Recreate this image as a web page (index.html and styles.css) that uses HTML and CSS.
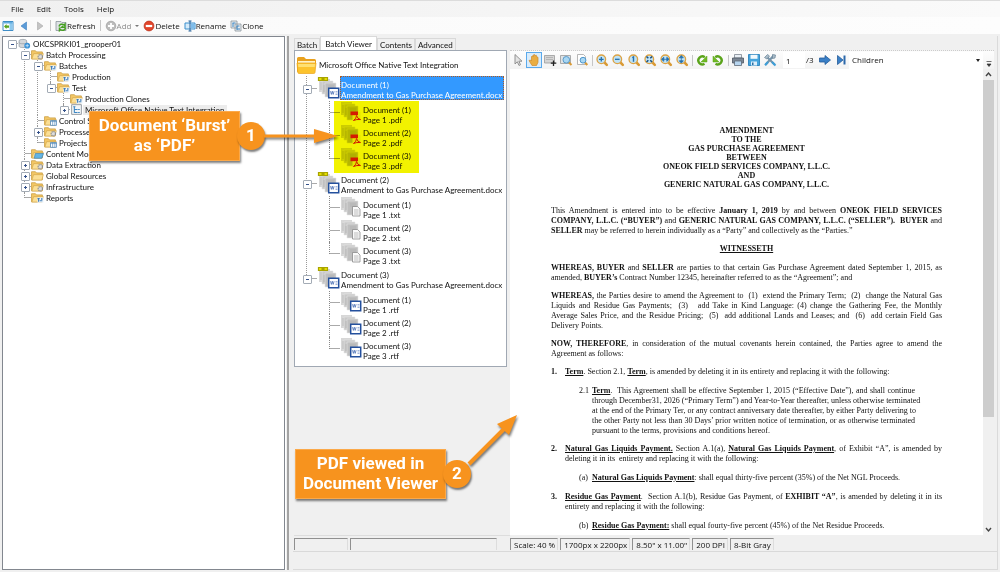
FILE: index.html
```html
<!DOCTYPE html>
<html lang="en">
<head>
    <meta charset="UTF-8">
    <meta name="viewport" content="width=device-width, initial-scale=1.0">
    <title>Grooper - Batch Viewer</title>
    <link rel="stylesheet" href="styles.css">
</head>
<body>
    <!-- Shared icons -->
    <svg class="sprite" width="0" height="0" aria-hidden="true">
        <symbol id="folder" viewBox="0 0 12 10">
            <path d="M.5 9V1.5h3.6l1 1.1h5.4V9z" fill="#f3c766" stroke="#c99a3c" stroke-width=".7"/>
            <path d="M.8 9.2 2.4 4.2h9L10 9.2z" fill="#fbdf95" stroke="#d2a548" stroke-width=".6"/>
        </symbol>
        <symbol id="folder-batch" viewBox="0 0 12 10">
            <use href="#folder"/>
            <path d="M6 5h5.5v4.8H6z" fill="#eef5fb"/>
            <path d="M6 6h2M8 8h2.5M7 6v3M10 5.4v2" stroke="#3f7cb8" stroke-width="1"/>
        </symbol>
        <symbol id="folder-gear" viewBox="0 0 12 10">
            <use href="#folder"/>
            <circle cx="8.6" cy="7" r="2" fill="#ddd" stroke="#8d8d8d" stroke-width="1.1" stroke-dasharray="1.2 .5"/>
        </symbol>
        <symbol id="folder-grid" viewBox="0 0 12 10">
            <use href="#folder"/>
            <path d="M6 5h5.5v4.5H6z" fill="#fff" stroke="#4d86b9" stroke-width=".7"/>
            <path d="M6 6h5.5M8 5v4.5M10 5v4.5" stroke="#4d86b9" stroke-width=".6"/>
        </symbol>
        <symbol id="folder-blue" viewBox="0 0 12 10">
            <use href="#folder"/>
            <path d="M4 5h7.5L10 9.4H3z" fill="#63b4e4" stroke="#3b82b5" stroke-width=".6"/>
        </symbol>
        <symbol id="server" viewBox="0 0 12 10">
            <path d="M1 2.5C1 .8 8 .8 8 2.5v5C8 9.2 1 9.2 1 7.5z" fill="#d3d7da" stroke="#929ba2" stroke-width=".7"/>
            <path d="M1 4.2c0 1.4 7 1.4 7 0" fill="none" stroke="#929ba2" stroke-width=".7"/>
            <circle cx="8.5" cy="7" r="2.7" fill="#3d93d6"/>
            <path d="M7 7h3M8.5 5.5v3" stroke="#cfe8fa" stroke-width=".7"/>
        </symbol>
        <symbol id="batch" viewBox="0 0 12 10">
            <path d="M1.5.5h9v9h-9z" fill="#f4f6f8" stroke="#8a9198" stroke-width=".8"/>
            <path d="M3 2.5h2M4 2.5v5.5M4 5h3M4 7.8h3M7.5 5H9M7.5 7.8H9" stroke="#3c86c2" stroke-width="1" fill="none"/>
        </symbol>
        <symbol id="big-folder" viewBox="0 0 21 18">
            <path d="M1 16V2.5Q1 1 2.5 1H8l2 2h8.5q1.5 0 1.5 1.5V8z" fill="#e9a11e"/>
            <path d="M2 5h17v5H2z" fill="#fff2c5"/>
            <path d="M1 7h19l-1 9.5q-.2 1-1.200 1H3q-1 0-1.200-1z" fill="#fcc32d" stroke="#eba51d" stroke-width=".7"/>
            <path d="M2 8h17l-.3 3H2.3z" fill="#ffe071"/>
        </symbol>
        <symbol id="stack" viewBox="0 0 21 21">
            <path d="M0 1h11v13H0z" fill="#d7d7d7"/>
            <path d="M3 3h11v13H3z" fill="#c9c9c9" stroke="#e6e6e6" stroke-width=".6"/>
            <path d="M6 5h11v14H6z" fill="#bfbfbf" stroke="#e6e6e6" stroke-width=".6"/>
            <path d="M2 4v8M5 7v7M9 8h6M9 10h6" stroke="#adadad" stroke-width=".6"/>
        </symbol>
        <symbol id="stack-word" viewBox="0 0 21 21">
            <use href="#stack"/>
            <path d="M9.7 10.2h10v9.500h-10z" fill="#fff" stroke="#24509d" stroke-width="1.5"/>
            <path d="M11.500 13.200l.9 3.200.9-3.200.9 3.200.9-3.200" fill="none" stroke="#4a70b5" stroke-width=".8"/>
            <path d="M16.500 13.500h2M16.500 15h2M16.500 16.500h2" stroke="#7793c8" stroke-width=".7"/>
        </symbol>
        <symbol id="stack-text" viewBox="0 0 21 21">
            <use href="#stack"/>
            <path d="M11.5 10.5h5l2.5 2.5v7h-7.5z" fill="#fafafa" stroke="#8b8b8b" stroke-width=".8"/>
            <path d="M13 14h4.500M13 16h4.500M13 18h4.500" stroke="#a4a4a4" stroke-width=".7"/>
        </symbol>
        <symbol id="stack-pdf" viewBox="0 0 21 21">
            <use href="#stack"/>
            <path d="M11.500 11h8v8.500h-8z" fill="#f1f1f1"/>
            <path d="M9.500 10.500h7.500v3.700H9.500z" fill="#e01c10"/>
            <path d="M12.500 19.500q3-2 3-5 1 3.500 4 4-4-.5-7 1z" fill="none" stroke="#e01c10" stroke-width="1"/>
        </symbol>
        <symbol id="lens" viewBox="0 0 14 14">
            <path d="M8.500 8.500l3.300 3.300" stroke="#d99a35" stroke-width="2.600" stroke-linecap="round"/>
            <circle cx="6.300" cy="6.300" r="4.300" fill="#bfe3f7" stroke="#dca243" stroke-width="1.300"/>
        </symbol>
        <symbol id="rotate" viewBox="0 0 14 14">
            <path d="M9.500 10.800A4 4 0 1 1 9.800 4.200" fill="none" stroke="#5aa31a" stroke-width="2.400"/>
            <path d="M12 3v6H6z" fill="#70ba24" stroke="#5aa31a" stroke-width=".5"/>
        </symbol>
    </svg>

    <nav class="menubar">
        <button>File</button>
        <button>Edit</button>
        <button>Tools</button>
        <button>Help</button>
    </nav>

    <div class="toolbar">
        <button aria-label="Toggle tree"><svg width="12" height="12" viewBox="0 0 12 12"><path d="M1 1.500h10v9H1z" fill="#fff" stroke="#3f8dc6"/><path d="M7.500 2h3v8h-3z" fill="#8dc9ee"/><path d="M1.500 2h9v1.500h-9z" fill="#62ade0"/><path d="M2 6.500 4.500 4v1.500H7v2.200H4.500V9z" fill="#58a51d"/></svg></button>
        <button class="nav" aria-label="Back"><svg width="8" height="10" viewBox="0 0 8 10"><path d="M6.500 1v8L1 5z" fill="#5b9bd8" stroke="#3c7fc0" stroke-width=".6"/></svg></button>
        <button class="nav" aria-label="Forward"><svg width="8" height="10" viewBox="0 0 8 10"><path d="M1.500 1v8L7 5z" fill="#c4c4c4" stroke="#aaa" stroke-width=".6"/></svg></button>
        <span class="sep"></span>
        <button><svg width="12" height="12" viewBox="0 0 12 12"><path d="M1 1.500h5l1 1h4v8H1z" fill="#dfe3e6" stroke="#8a949c" stroke-width=".8"/><path d="M4 6.500a3 3 0 0 1 5-1.500l1-1v3.200H6.800L8 6M10.500 8a3 3 0 0 1-5 1.500l-1 1V7.600" fill="none" stroke="#47a023" stroke-width="1.500"/></svg>Refresh</button>
        <span class="sep"></span>
        <button disabled><svg width="12" height="12" viewBox="0 0 12 12"><circle cx="6" cy="6" r="4.800" fill="#bcbcbc" stroke="#a2a2a2" stroke-width=".8"/><path d="M6 3v6M3 6h6" stroke="#fff" stroke-width="1.800"/></svg>Add<i class="caret"></i></button>
        <button><svg width="12" height="12" viewBox="0 0 12 12"><circle cx="6" cy="6" r="4.900" fill="#e2452b" stroke="#bd3620" stroke-width=".8"/><path d="M2.800 6h6.400" stroke="#fff" stroke-width="2.200"/></svg>Delete</button>
        <button><svg width="12" height="12" viewBox="0 0 12 12"><path d="M1 3h10v6H1z" fill="#d5ebfa" stroke="#3b8fcd"/><path d="M4.500 1h3M6 1v10M4.500 11h3" stroke="#27639b" fill="none"/><path d="M7 4h3.500v4H7z" fill="#7dbcea"/></svg>Rename</button>
        <button><svg width="12" height="12" viewBox="0 0 12 12"><path d="M1 1h6v7H1zM5 4h6v7H5z" fill="#e8edf1" stroke="#8a949c" stroke-width=".8"/><path d="M2.500 3h3M3 3v4M6.500 6h3M7 6v4M7 9h3" stroke="#3c86c2"/></svg>Clone</button>
    </div>

    <main class="workspace">
        <section class="tree-panel">
            <ul class="tree">
                <li>
                    <div class="row"><i class="exp open"></i><svg><use href="#server"/></svg><span>OKCSPRKI01_grooper01</span></div>
                    <ul>
                        <li>
                            <div class="row"><i class="exp open"></i><svg><use href="#folder-gear"/></svg><span>Batch Processing</span></div>
                            <ul>
                                <li>
                                    <div class="row"><i class="exp open"></i><svg><use href="#folder-batch"/></svg><span>Batches</span></div>
                                    <ul>
                                        <li><div class="row"><i class="exp"></i><svg><use href="#folder-batch"/></svg><span>Production</span></div></li>
                                        <li>
                                            <div class="row"><i class="exp open"></i><svg><use href="#folder-batch"/></svg><span>Test</span></div>
                                            <ul>
                                                <li><div class="row"><i class="exp"></i><svg><use href="#folder-batch"/></svg><span>Production Clones</span></div></li>
                                                <li><div class="row current"><i class="exp closed"></i><svg><use href="#batch"/></svg><span>Microsoft Office Native Text Integration</span></div></li>
                                            </ul>
                                        </li>
                                    </ul>
                                </li>
                                <li><div class="row"><i class="exp"></i><svg><use href="#folder-grid"/></svg><span>Control Sheets</span></div></li>
                                <li><div class="row"><i class="exp closed"></i><svg><use href="#folder-gear"/></svg><span>Processes</span></div></li>
                                <li><div class="row"><i class="exp"></i><svg><use href="#folder-grid"/></svg><span>Projects</span></div></li>
                            </ul>
                        </li>
                        <li><div class="row"><i class="exp"></i><svg><use href="#folder-blue"/></svg><span>Content Models</span></div></li>
                        <li><div class="row"><i class="exp closed"></i><svg><use href="#folder-gear"/></svg><span>Data Extraction</span></div></li>
                        <li><div class="row"><i class="exp closed"></i><svg><use href="#folder"/></svg><span>Global Resources</span></div></li>
                        <li><div class="row"><i class="exp closed"></i><svg><use href="#folder-gear"/></svg><span>Infrastructure</span></div></li>
                        <li><div class="row"><i class="exp"></i><svg><use href="#folder-batch"/></svg><span>Reports</span></div></li>
                    </ul>
                </li>
            </ul>
        </section>

        <div class="splitter"></div>

        <div class="editor">
            <div class="tabs" role="tablist">
                <button role="tab">Batch</button>
                <button role="tab" class="active" aria-selected="true">Batch Viewer</button>
                <button role="tab">Contents</button>
                <button role="tab">Advanced</button>
            </div>

            <div class="panes">
                <section class="batch-pane">
                    <div class="batch-tree">
                        <div class="batch-root"><svg width="21" height="18"><use href="#big-folder"/></svg>Microsoft Office Native Text Integration</div>
                        <ul class="docs">
                            <li>
                                <div class="doc selected"><i class="exp open"></i><svg class="chain" width="12" height="6" viewBox="0 0 12 6"><path d="M1.500 1.500h4v3h-4zM6.500 1.500h4v3h-4zM4 3h4" fill="#e6e000" stroke="#a8a300" stroke-width="1.200"/></svg><svg width="21" height="21"><use href="#stack-word"/></svg><p>Document (1)<br>Amendment to Gas Purchase Agreement.docx</p></div>
                                <ul class="pages marked">
                                    <li><svg width="21" height="21"><use href="#stack-pdf"/></svg><p>Document (1)<br>Page 1 .pdf</p></li>
                                    <li><svg width="21" height="21"><use href="#stack-pdf"/></svg><p>Document (2)<br>Page 2 .pdf</p></li>
                                    <li><svg width="21" height="21"><use href="#stack-pdf"/></svg><p>Document (3)<br>Page 3 .pdf</p></li>
                                </ul>
                            </li>
                            <li>
                                <div class="doc"><i class="exp open"></i><svg class="chain" width="12" height="6" viewBox="0 0 12 6"><path d="M1.500 1.500h4v3h-4zM6.500 1.500h4v3h-4zM4 3h4" fill="#e6e000" stroke="#a8a300" stroke-width="1.200"/></svg><svg width="21" height="21"><use href="#stack-word"/></svg><p>Document (2)<br>Amendment to Gas Purchase Agreement.docx</p></div>
                                <ul class="pages">
                                    <li><svg width="21" height="21"><use href="#stack-text"/></svg><p>Document (1)<br>Page 1 .txt</p></li>
                                    <li><svg width="21" height="21"><use href="#stack-text"/></svg><p>Document (2)<br>Page 2 .txt</p></li>
                                    <li><svg width="21" height="21"><use href="#stack-text"/></svg><p>Document (3)<br>Page 3 .txt</p></li>
                                </ul>
                            </li>
                            <li>
                                <div class="doc"><i class="exp open"></i><svg class="chain" width="12" height="6" viewBox="0 0 12 6"><path d="M1.500 1.500h4v3h-4zM6.500 1.500h4v3h-4zM4 3h4" fill="#e6e000" stroke="#a8a300" stroke-width="1.200"/></svg><svg width="21" height="21"><use href="#stack-word"/></svg><p>Document (3)<br>Amendment to Gas Purchase Agreement.docx</p></div>
                                <ul class="pages">
                                    <li><svg width="21" height="21"><use href="#stack-word"/></svg><p>Document (1)<br>Page 1 .rtf</p></li>
                                    <li><svg width="21" height="21"><use href="#stack-word"/></svg><p>Document (2)<br>Page 2 .rtf</p></li>
                                    <li><svg width="21" height="21"><use href="#stack-word"/></svg><p>Document (3)<br>Page 3 .rtf</p></li>
                                </ul>
                            </li>
                        </ul>
                    </div>
                    <div class="status batch-status"><span></span><span></span></div>
                </section>

                <section class="viewer">
                    <div class="viewer-bar">
                        <button aria-label="Select"><svg viewBox="0 0 14 14"><path d="M4 1.500v9.500l2.300-2.200 1.700 3.700 1.500-.8-1.600-3.500H11z" fill="#e4e4e4" stroke="#888" stroke-width=".9"/></svg></button>
                        <button class="on" aria-label="Pan"><svg viewBox="0 0 14 14"><path d="M2 7.500 3.500 7l1 1V3.500l1.300-.6.4 1V2l1.500-.4.3 1.200 1.300-.5.5 1.700 1.200.3v5L9.500 12.500H5z" fill="#e9ad42" stroke="#d0892a" stroke-width=".7"/></svg></button>
                        <button aria-label="Add region"><svg viewBox="0 0 14 14"><path d="M1.500 2.500h10v7.500h-10z" fill="#d5d5d5" stroke="#9a9a9a" stroke-width=".8"/><path d="M3 4.500h7M3 6.500h7" stroke="#b5b5b5"/><path d="M10.500 7.500v5.500M7.800 10.200h5.500" stroke="#222" stroke-width="1.300"/></svg></button>
                        <button aria-label="Zoom region"><svg viewBox="0 0 14 14"><path d="M1.500 2.500h10v8h-10z" fill="#dfe3e6" stroke="#999" stroke-width=".8"/><path d="M9.500 9l3 3" stroke="#d99a35" stroke-width="2"/><circle cx="7.300" cy="6.800" r="3.300" fill="#a9d7f3" stroke="#5a9ac9"/></svg></button>
                        <button aria-label="Magnifier"><svg viewBox="0 0 14 14"><path d="M2.500 1.500h6l2 2v8h-8z" fill="#fff" stroke="#a5a5a5" stroke-width=".8"/><path d="M9.800 9.300l2.500 2.700" stroke="#d99a35" stroke-width="2"/><circle cx="8" cy="7.200" r="2.900" fill="#a9d7f3" stroke="#4f97cc"/></svg></button>
                        <span class="sep"></span>
                        <button aria-label="Zoom in"><svg viewBox="0 0 14 14"><use href="#lens"/><path d="M6.300 4v4.600M4 6.300h4.600" stroke="#2470ad" stroke-width="1.300"/></svg></button>
                        <button aria-label="Zoom out"><svg viewBox="0 0 14 14"><use href="#lens"/><path d="M4 6.300h4.600" stroke="#2470ad" stroke-width="1.300"/></svg></button>
                        <button aria-label="Actual size"><svg viewBox="0 0 14 14"><use href="#lens"/><path d="M5.300 4.600l1.200-.6v4.800" fill="none" stroke="#2470ad" stroke-width="1.400"/></svg></button>
                        <button aria-label="Fit page"><svg viewBox="0 0 14 14"><use href="#lens"/><path d="M3.500 3.500l5.600 5.600M9.100 3.500 3.500 9.100" stroke="#174f80" stroke-width="1.500" stroke-dasharray="2.600 2.700"/></svg></button>
                        <button aria-label="Fit width"><svg viewBox="0 0 14 14"><use href="#lens"/><path d="M2.500 6.300l2.300-2v4zM10.100 6.300l-2.300-2v4zM4 6.300h5" fill="#2470ad" stroke="#2470ad" stroke-width=".8"/></svg></button>
                        <button aria-label="Fit height"><svg viewBox="0 0 14 14"><use href="#lens"/><path d="M6.300 2.500l-2 2.300h4zM6.300 10.100l-2-2.300h4zM6.300 4v5" fill="#2470ad" stroke="#2470ad" stroke-width=".8"/></svg></button>
                        <span class="sep"></span>
                        <button aria-label="Rotate left"><svg viewBox="0 0 14 14"><use href="#rotate"/></svg></button>
                        <button aria-label="Rotate right"><svg viewBox="0 0 14 14"><g transform="matrix(-1 0 0 1 14 0)"><use href="#rotate"/></g></svg></button>
                        <span class="sep"></span>
                        <button aria-label="Print"><svg viewBox="0 0 14 14"><path d="M3.500 1.500h7V5h-7z" fill="#e8eef4" stroke="#7d8791" stroke-width=".8"/><path d="M1.500 5h11v5h-11z" fill="#7c8794" stroke="#4c5663" stroke-width=".8"/><path d="M3.500 8h7v4.500h-7z" fill="#b7d5ef" stroke="#5e6a77" stroke-width=".8"/></svg></button>
                        <button aria-label="Save"><svg viewBox="0 0 14 14"><path d="M1.500 1.500h11v11h-11z" fill="#45a4dc" stroke="#2a83bd" stroke-width=".9"/><path d="M3.500 1.800h7v4h-7z" fill="#f2f9fd"/><path d="M4 8.500h6v4H4z" fill="#dceefa"/><path d="M5 9.500h1.500v2.500H5z" fill="#2a6fa3"/></svg></button>
                        <button aria-label="Settings"><svg viewBox="0 0 14 14"><path d="M2.500 11.800l8-9M11.800 11.800 4 4" stroke="#7693a8" stroke-width="2.200"/><path d="M1.500 4.500l3-3 2 1.500-2.700 3zM9.500 1.500l3 .5-.5 3-2.500.5z" fill="#a9bcc9" stroke="#688296" stroke-width=".7"/><path d="M9 9l3.500 3.500M5 9l-3 3.200" stroke="#3f9fd8" stroke-width="2"/></svg></button>
                        <input class="page-no" type="text" value="1" aria-label="Page">
                        <span class="page-total">/3</span>
                        <button aria-label="Next page"><svg viewBox="0 0 14 14"><path d="M1.500 5h5.500V2.500L12.500 7 7 11.500V9H1.500z" fill="#3a7fc6" stroke="#235c99" stroke-width=".8"/></svg></button>
                        <button aria-label="Last page"><svg viewBox="0 0 14 14"><path d="M3.500 2.500v9L9 7z" fill="#3a7fc6" stroke="#235c99" stroke-width=".8"/><path d="M10.500 2.500v9" stroke="#2c68aa" stroke-width="2"/></svg></button>
                        <div class="select-wrap">
                            <select aria-label="Scope"><option>Children</option></select>
                        </div>
                        <button class="more" aria-label="Toolbar options"><svg viewBox="0 0 8 8"><path d="M1.500 1.500h5M2 4h4L4 6.500z" fill="#333" stroke="#333" stroke-width=".7"/></svg></button>
                    </div>

                    <div class="canvas">
                        <article class="paper">
                            <h1>AMENDMENT<br>TO THE<br>GAS PURCHASE AGREEMENT<br>BETWEEN<br>ONEOK FIELD SERVICES COMPANY, L.L.C.<br>AND<br>GENERIC NATURAL GAS COMPANY, L.L.C.</h1>
                            <p>This Amendment is entered into to be effective <b>January 1, 2019</b> by and between <b>ONEOK FIELD SERVICES</b><br>
                                <b>COMPANY, L.L.C. (“BUYER”)</b> and <b>GENERIC NATURAL GAS COMPANY, L.L.C. (“SELLER”).&nbsp; BUYER</b> and<br>
                                <span class="last"><b>SELLER</b> may be referred to herein individually as a “Party” and collectively as the “Parties.”</span></p>
                            <h2>WITNESSETH</h2>
                            <p><b>WHEREAS, BUYER</b> and <b>SELLER</b> are parties to that certain Gas Purchase Agreement dated September 1, 2015, as<br>
                                <span class="last">amended, <b>BUYER’s</b> Contract Number 12345, hereinafter referred to as the “Agreement”; and</span></p>
                            <p><b>WHEREAS,</b> the Parties desire to amend the Agreement to &nbsp;(1)&nbsp; extend the Primary Term;&nbsp; (2)&nbsp; change the Natural Gas<br>
                                Liquids and Residue Gas Payments;&nbsp; (3)&nbsp;&nbsp; add Take in Kind Language: (4) change the Gathering Fee, the Monthly<br>
                                Average Sales Price, and the Residue Pricing;&nbsp; (5)&nbsp; add additional Lands and Leases; and &nbsp;(6)&nbsp; add certain Field Gas<br>
                                <span class="last">Delivery Points.</span></p>
                            <p><b>NOW, THEREFORE</b>, in consideration of the mutual covenants herein contained, the Parties agree to amend the<br>
                                <span class="last">Agreement as follows:</span></p>
                            <div class="clause">
                                <b>1.</b>
                                <p><span class="last"><u>Term</u>. Section 2.1, <u>Term</u>, is amended by deleting it in its entirety and replacing it with the following:</span></p>
                            </div>
                            <div class="clause sub narrow">
                                <span>2.1</span>
                                <p><u>Term</u>.&nbsp; This Agreement shall be effective September 1, 2015 (“Effective Date”), and shall continue<br>
                                    through December31, 2026 (“Primary Term”) and Year-to-Year thereafter, unless otherwise terminated<br>
                                    at the end of the Primary Ter, or any contract anniversary date thereafter, by either Party delivering to<br>
                                    the other Party not less than 30 Days’ prior written notice of termination, or as otherwise terminated<br>
                                    <span class="last">pursuant to the terms, provisions and conditions hereof.</span></p>
                            </div>
                            <div class="clause">
                                <b>2.</b>
                                <p><u>Natural Gas Liquids Payment.</u> Section A.1(a), <u>Natural Gas Liquids Payment</u>, of Exhibit “A”, is amended by<br>
                                    <span class="last">deleting it in its &nbsp;entirety and replacing it with the following:</span></p>
                            </div>
                            <div class="clause sub">
                                <span>(a)</span>
                                <p><span class="last"><u>Natural Gas Liquids Payment</u>: shall equal thirty-five percent (35%) of the Net NGL Proceeds.</span></p>
                            </div>
                            <div class="clause">
                                <b>3.</b>
                                <p><u>Residue Gas Payment</u>.&nbsp; Section A.1(b), Residue Gas Payment, of <b>EXHIBIT “A”</b>, is amended by deleting it in its<br>
                                    <span class="last">entirety and replacing it with the following:</span></p>
                            </div>
                            <div class="clause sub">
                                <span>(b)</span>
                                <p><span class="last"><u>Residue Gas Payment:</u> shall equal fourty-five percent (45%) of the Net Residue Proceeds.</span></p>
                            </div>
                        </article>
                        <div class="scrollbar">
                            <svg viewBox="0 0 11 11"><path d="M3 7l2.500-3L8 7" fill="none" stroke="#444" stroke-width="1.400"/></svg>
                            <div class="track"><div class="thumb"></div></div>
                            <svg viewBox="0 0 11 11"><path d="M3 4l2.500 3L8 4" fill="none" stroke="#444" stroke-width="1.400"/></svg>
                        </div>
                    </div>

                    <div class="status">
                        <span>Scale: 40 %</span>
                        <span>1700px x 2200px</span>
                        <span>8.50" x 11.00"</span>
                        <span>200 DPI</span>
                        <span>8-Bit Gray</span>
                    </div>
                </section>
            </div>
        </div>
    </main>

    <!-- Tutorial callouts -->
    <div class="callout burst">
        Document ‘Burst’<br>as ‘PDF’
        <span class="num">1</span>
        <svg class="arrow" width="76" height="16" viewBox="0 0 76 16"><path d="M0 8h56" stroke="#f7931e" stroke-width="3"/><path d="M50 1l24 7-24 7z" fill="#f7931e"/></svg>
    </div>
    <div class="callout viewed">
        PDF viewed in<br>Document Viewer
        <span class="num">2</span>
        <svg class="arrow" width="54" height="54" viewBox="0 0 54 54"><path d="M2 50 38 14" stroke="#f7931e" stroke-width="4"/><path d="M50 1 42 21 30 10z" fill="#f7931e"/></svg>
    </div>
</body>
</html>
```

FILE: styles.css
```css
* {
    box-sizing: border-box;
}
html, body {
    height: 100%;
}
body {
    margin: 0;
    display: flex;
    flex-direction: column;
    position: relative;
    overflow: hidden;
    background-color: #f0f0f0;
    color: #111;
    font-family: "Open Sans", "Noto Sans", sans-serif;
    font-size: 8px;
    line-height: 10px;
}
ul {
    list-style: none;
    margin: 0;
    padding: 0;
}
p {
    margin: 0;
}
svg {
    display: block;
    flex: none;
}
.sprite {
    position: absolute;
}
button, input, select {
    font: inherit;
    color: inherit;
    border: none;
    background: none;
    padding: 0;
    margin: 0;
}

/* Menu and main toolbar */
.menubar {
    display: flex;
    gap: 13px;
    height: 17px;
    padding: 0 11px;
    background: linear-gradient(to right, #f0f0f0, #fafafa);
    border-top: 1px solid #dcdcdc;
}
.toolbar {
    display: flex;
    align-items: center;
    gap: 4px;
    height: 17px;
    padding: 0 2px;
    background: linear-gradient(to right, #fafafa, #fdfdfd);
}
.toolbar button {
    display: flex;
    align-items: center;
}
.toolbar .nav {
    width: 12px;
    justify-content: center;
}
.toolbar button:disabled {
    color: #8d8d8d;
}
.sep {
    width: 1px;
    height: 11px;
    background-color: #c6c6c6;
}
.caret {
    margin-left: 4px;
    border: 2px solid transparent;
    border-top-color: #777;
    border-bottom: none;
}

/* Layout */
.workspace {
    flex: 1;
    display: flex;
    min-height: 0;
    padding: 2px;
}
.tree-panel {
    width: 283px;
    background-color: #fff;
    border: 1px solid #82878f;
    padding: 1px 2px;
}
.splitter {
    width: 4px;
    margin-right: 4px;
    border-left: 1px solid #fff;
    border-right: 2px solid #a3a3a3;
}
.editor {
    flex: 1;
    display: flex;
    flex-direction: column;
    min-width: 0;
    border: 1px solid #dadada;
    border-top: none;
    border-left: none;
}
.panes {
    flex: 1;
    display: flex;
    min-height: 0;
    margin-bottom: 17px;
    padding-right: 3px;
    border-bottom: 1px solid #d9d9d9;
}

/* Node tree */
.tree, .tabs, .batch-tree {
    font-family: Lato, "Liberation Sans", sans-serif;
}
.tree ul {
    margin-left: 13px;
}
.tree li {
    position: relative;
}
.tree li::before {
    content: "";
    position: absolute;
    left: 6px;
    top: 0;
    bottom: 0;
    border-left: 1px dotted #999;
}
.tree li:last-child::before {
    bottom: auto;
    height: 6px;
}
.tree > li::before {
    display: none;
}
.row {
    display: flex;
    align-items: center;
    height: 11px;
    white-space: nowrap;
}
.row svg {
    width: 13px;
    height: 11px;
}
.row span {
    padding: 0 2px;
}
.row.current span {
    background-color: #ececec;
}
.row .exp {
    width: 13px;
    height: 7px;
    background: linear-gradient(#aaa, #aaa) 7px 3px / 6px 1px no-repeat;
}
.exp {
    position: relative;
    flex: none;
}
.exp.open::before, .exp.closed::before {
    content: "";
    position: absolute;
    left: 3px;
    top: 0;
    width: 7px;
    height: 7px;
    border: 1px solid #a3abb5;
    border-radius: 1px;
    background: linear-gradient(#34518a, #34518a) center / 3px 1px no-repeat #fff;
}
.exp.closed::before {
    background: linear-gradient(#34518a, #34518a) center / 3px 1px no-repeat, linear-gradient(#34518a, #34518a) center / 1px 3px no-repeat #fff;
}

/* Tabs */
.tabs {
    display: flex;
    align-items: flex-end;
    height: 14px;
    padding-left: 1px;
}
.tabs button {
    height: 12px;
    padding: 0 2px;
    border: 1px solid #d9d9d9;
    border-bottom: none;
}
.tabs .active {
    height: 14px;
    padding: 0 4px;
    background-color: #fff;
}

/* Batch tree */
.batch-pane {
    width: 217px;
    display: flex;
    flex-direction: column;
    justify-content: space-between;
    padding-left: 1px;
}
.batch-tree {
    width: 213px;
    padding: 3px 2px 0 0;
    background-color: #fff;
    border: 1px solid #a0a8b3;
}
.batch-root {
    display: flex;
    align-items: center;
    gap: 2px;
    height: 22px;
    padding-left: 1px;
}
.docs {
    padding-bottom: 5px;
    background: repeating-linear-gradient(#999 0 1px, #fff 1px 2px) 11px 0 / 1px 202px no-repeat;
}
.doc {
    display: flex;
    height: 25px;
}
.doc .exp {
    width: 24px;
    height: 7px;
    margin-top: 9px;
    background: linear-gradient(#aaa, #aaa) 15px 3px / 7px 1px no-repeat;
}
.doc .exp::before {
    left: 8px;
}
.doc .chain {
    position: absolute;
    margin: 0 0 0 22px;
    z-index: 1;
}
.doc p {
    flex: 1;
    height: 24px;
    padding: 4px 0 0 1px;
    white-space: nowrap;
}
.doc svg {
    margin-top: 2px;
}
.doc.selected p {
    background-color: #3399ff;
    color: #fff;
    outline: 1px dotted #b05a20;
    outline-offset: -1px;
}
.pages {
    position: relative;
    width: 85px;
    margin-left: 39px;
}
.pages li {
    position: relative;
    display: flex;
    height: 23px;
    padding-left: 7px;
}
.pages li:last-child {
    height: 24px;
}
.pages li::before {
    content: "";
    position: absolute;
    left: -5px;
    top: 0;
    bottom: 0;
    width: 10px;
    border-left: 1px dotted #888;
    background: linear-gradient(#aaa, #aaa) 0 11px / 10px 1px no-repeat;
}
.pages li:last-child::before {
    bottom: 12px;
}
.pages li p {
    padding: 4px 0 0 1px;
    white-space: nowrap;
}
.pages.marked::after {
    content: "";
    position: absolute;
    left: 0;
    right: 0;
    top: 0;
    height: 72px;
    background-color: #f2f200;
    mix-blend-mode: multiply;
}

/* Viewer */
.viewer {
    flex: 1;
    display: flex;
    flex-direction: column;
    min-width: 0;
}
.viewer-bar {
    display: flex;
    align-items: center;
    height: 19px;
    border-top: 1px dotted #ccc;
    background: linear-gradient(#fdfdfd, #f3f3f3);
}
.viewer-bar button {
    width: 16px;
    height: 16px;
    padding: 1px;
}
.viewer-bar svg {
    width: 14px;
    height: 14px;
}
.viewer-bar .on {
    border: 1px solid #5aa9ec;
    background-color: #d9ecfb;
    padding: 0;
}
.viewer-bar .sep {
    margin: 0 1px 0 2px;
}
.viewer-bar .page-no {
    width: 22px;
    height: 16px;
    margin-left: 5px;
    padding: 0 3px;
    background-color: #fff;
}
.viewer-bar .page-total {
    width: 12px;
    padding-left: 1px;
}
.select-wrap {
    flex: 1;
    position: relative;
    height: 17px;
    background-color: #fff;
}
.select-wrap::after {
    content: "";
    position: absolute;
    right: 3px;
    top: 7px;
    border: 2px solid transparent;
    border-top: 3px solid #222;
    border-bottom: none;
    pointer-events: none;
}
.select-wrap select {
    width: 100%;
    height: 100%;
    padding-left: 3px;
    appearance: none;
}
.viewer-bar .more {
    align-self: flex-end;
    width: 11px;
    height: 10px;
}
.viewer-bar .more svg {
    width: 8px;
    height: 8px;
    margin-left: 1px;
}
.canvas {
    flex: 1;
    display: flex;
    min-height: 0;
    background-color: #fff;
}
.paper {
    flex: 1;
    overflow: hidden;
    padding: 57px 41px 0;
    font-family: "Liberation Serif", "Times New Roman", serif;
    text-align: justify;
    text-align-last: justify;
}
.paper h1 {
    margin: 0 0 17px;
    font-size: 8px;
    line-height: 9px;
    text-align-last: center;
}
.paper h2 {
    margin: 0 0 9px;
    font-size: 8px;
    text-decoration: underline;
    text-align-last: center;
}
.paper p {
    margin-bottom: 8px;
}
.paper u {
    font-weight: bold;
}
.last {
    display: block;
    text-align-last: left;
}
.clause {
    display: grid;
    grid-template-columns: 14px 1fr;
    margin-bottom: 9px;
    text-align-last: left;
}
.clause p {
    margin: 0;
    text-align-last: justify;
}
.clause.sub {
    padding-left: 28px;
    grid-template-columns: 13px 1fr;
}
.clause.narrow {
    grid-template-columns: 13px minmax(0, 1fr);
    margin-bottom: 8px;
    padding-right: 27px;
    white-space: nowrap;
}
.scrollbar {
    width: 11px;
    display: flex;
    flex-direction: column;
    background-color: #f0f0f0;
}
.scrollbar svg {
    width: 11px;
    height: 11px;
}
.track {
    flex: 1;
}
.thumb {
    height: 76%;
    background-color: #cdcdcd;
}

/* Status cells */
.status {
    display: flex;
    gap: 2px;
    height: 16px;
    padding: 3px 0 1px;
}
.status span {
    padding: 0 2px 0 3px;
    border-top: 1px solid #909090;
    border-left: 1px solid #909090;
    border-right: 1px solid #ddd;
    line-height: 11px;
    white-space: nowrap;
}
.batch-status {
    border-top: 1px solid #ddd;
    padding-top: 2px;
    padding-right: 13px;
}
.batch-status span {
    width: 54px;
}
.batch-status span + span {
    flex: 1;
}

/* Callouts float over the application */
.callout {
    position: absolute;
    width: 151px;
    height: 50px;
    padding-top: 3px;
    border: 1px solid #fba94a;
    background-color: #f7931e;
    box-shadow: 1px 2px 2px rgba(0, 0, 0, 0.5);
    color: #fff;
    font-family: Roboto, sans-serif;
    font-size: 17px;
    font-weight: bold;
    line-height: 20px;
    text-align: center;
}
.burst {
    left: 89px;
    top: 111px;
}
.viewed {
    left: 295px;
    top: 449px;
}
.num {
    position: absolute;
    left: 147px;
    top: 10px;
    width: 28px;
    height: 28px;
    border-radius: 50%;
    background-color: #f7931e;
    box-shadow: 1px 2px 2px rgba(0, 0, 0, 0.5);
    line-height: 27px;
}
.arrow {
    position: absolute;
    left: 174px;
    top: 16px;
    filter: drop-shadow(1px 2px 1px rgba(0, 0, 0, 0.5));
}
.viewed .arrow {
    left: 171px;
    top: -36px;
}
```
